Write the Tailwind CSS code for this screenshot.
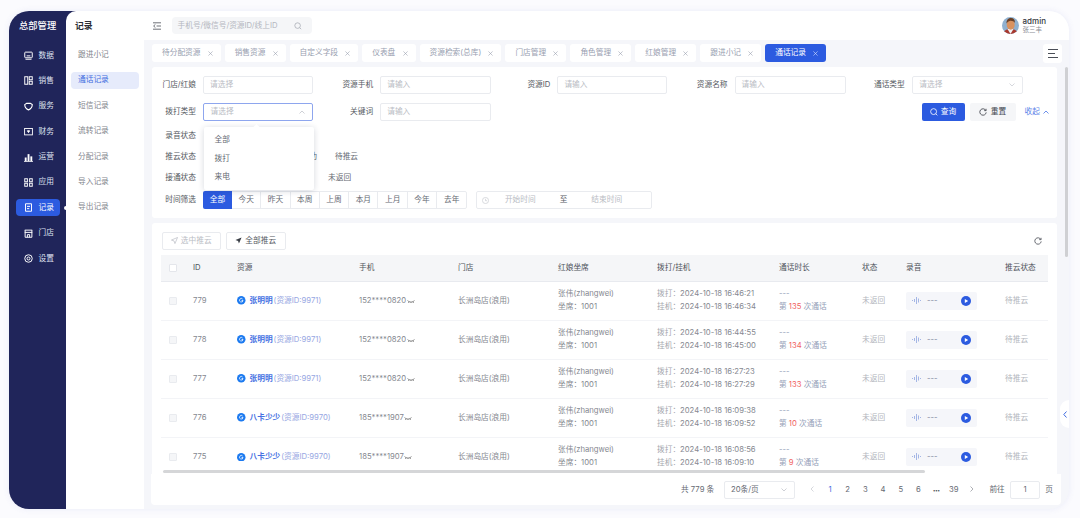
<!DOCTYPE html>
<html lang="zh">
<head>
<meta charset="utf-8">
<title>通话记录</title>
<script src="https://cdn.jsdelivr.net/npm/@tailwindcss/browser@4"></script>
</head>
<body class="m-0">
<div class="w-[1080px] h-[518px] overflow-hidden bg-[#fbfbfe] pt-[11px] pl-[9px] font-[family-name:Inter,'Noto_Sans_CJK_SC',sans-serif] text-[7.7px] leading-[12px] text-[#666a73]">
  <div class="relative flex w-[1060px] h-[498px] rounded-[20px] overflow-hidden bg-[#f5f6fa] shadow-[0_0_6px_rgba(90,100,200,0.10)]">
    <!-- Navy rail + submenu -->
    <div class="flex shrink-0 bg-[#20255a]">
      <nav class="relative w-[57px] flex flex-col text-[#dfe2f0]">
        <div class="h-[29px] pt-[9px] pl-[10px] text-[9.3px] font-medium text-white">总部管理</div>
        <ul class="mt-[7px] flex flex-col gap-[8.4px] pl-[6.5px] pr-[6.5px]">
          <li class="h-[17px] flex items-center gap-[6px] pl-[8px] rounded-[4px]"><svg class="w-[9px] h-[9px]" viewBox="0 0 12 12" fill="none" stroke="#fff" stroke-width="1.3"><rect x="1" y="1.5" width="10" height="7.5" rx="1"/><path d="M2 11h8M3.5 6.5h5"/></svg><span>数据</span></li>
          <li class="h-[17px] flex items-center gap-[6px] pl-[8px] rounded-[4px]"><svg class="w-[9px] h-[9px]" viewBox="0 0 12 12" fill="none" stroke="#fff" stroke-width="1.3"><rect x="1" y="1" width="4" height="10"/><rect x="7" y="1" width="4" height="4"/><rect x="7" y="7" width="4" height="4"/></svg><span>销售</span></li>
          <li class="h-[17px] flex items-center gap-[6px] pl-[8px] rounded-[4px]"><svg class="w-[9px] h-[9px]" viewBox="0 0 12 12" fill="none" stroke="#fff" stroke-width="1.5"><path d="M1 3.5 3.5 1.8h5L11 3.5c0 3-2 5.5-5 7-3-1.5-5-4-5-7Z"/></svg><span>服务</span></li>
          <li class="h-[17px] flex items-center gap-[6px] pl-[8px] rounded-[4px]"><svg class="w-[9px] h-[9px]" viewBox="0 0 12 12" fill="none" stroke="#fff" stroke-width="1.2"><rect x="0.8" y="2" width="10.4" height="8.5"/><path d="M4.5 5h3L6 7.5Z" fill="#fff"/></svg><span>财务</span></li>
          <li class="h-[17px] flex items-center gap-[6px] pl-[8px] rounded-[4px]"><svg class="w-[9px] h-[9px]" viewBox="0 0 12 12" fill="#fff"><rect x="1" y="6" width="2.5" height="5"/><rect x="4.8" y="1.5" width="2.5" height="9.5"/><rect x="8.5" y="4.5" width="2.5" height="6.5"/><rect x="0" y="11" width="12" height="1"/></svg><span>运营</span></li>
          <li class="h-[17px] flex items-center gap-[6px] pl-[8px] rounded-[4px]"><svg class="w-[9px] h-[9px]" viewBox="0 0 12 12" fill="none" stroke="#fff" stroke-width="1.3"><rect x="1" y="1" width="3.5" height="4"/><rect x="1" y="7" width="3.5" height="4"/><rect x="7.5" y="1" width="3.5" height="4"/><rect x="7.5" y="7" width="3.5" height="4"/></svg><span>应用</span></li>
          <li class="h-[17px] flex items-center gap-[6px] pl-[8px] rounded-[4px] bg-[#2c5be0] text-white"><svg class="w-[9px] h-[9px]" viewBox="0 0 12 12" fill="none" stroke="#fff" stroke-width="1.3"><path d="M2 1h8v10H2Z"/><path d="M4 4.5h4M4 7.5h3"/></svg><span>记录</span></li>
          <li class="h-[17px] flex items-center gap-[6px] pl-[8px] rounded-[4px]"><svg class="w-[9px] h-[9px]" viewBox="0 0 12 12" fill="none" stroke="#fff" stroke-width="1.3"><path d="M1 1.5h10M1.5 1.5V11h9V1.5M1 4.5h10M4.5 11V7.5h3V11"/></svg><span>门店</span></li>
          <li class="h-[17px] flex items-center gap-[6px] pl-[8px] rounded-[4px]"><svg class="w-[9px] h-[9px]" viewBox="0 0 12 12" fill="none" stroke="#fff" stroke-width="1.3"><circle cx="6" cy="6" r="5"/><circle cx="6" cy="6" r="2"/></svg><span>设置</span></li>
        </ul>
        <span class="absolute left-[55px] top-[194.5px] w-[4px] h-[4px] rounded-full bg-white"></span>
      </nav>
      <aside class="w-[78px] bg-white rounded-tl-[10px] px-[5px] text-[#82858c]">
        <div class="h-[29px] pt-[9px] pl-[4px] text-[8.8px] font-semibold text-[#2c2f36]">记录</div>
        <ul class="mt-[6.5px] flex flex-col gap-[8.4px]">
          <li class="h-[17px] flex items-center pl-[7px] rounded-[4px]">跟进小记</li>
          <li class="h-[17px] flex items-center pl-[7px] rounded-[4px] bg-[#e6ebfb] text-[#3f6be0]">通话记录</li>
          <li class="h-[17px] flex items-center pl-[7px] rounded-[4px]">短信记录</li>
          <li class="h-[17px] flex items-center pl-[7px] rounded-[4px]">流转记录</li>
          <li class="h-[17px] flex items-center pl-[7px] rounded-[4px]">分配记录</li>
          <li class="h-[17px] flex items-center pl-[7px] rounded-[4px]">导入记录</li>
          <li class="h-[17px] flex items-center pl-[7px] rounded-[4px]">导出记录</li>
        </ul>
      </aside>
    </div>

    <!-- Main -->
    <div class="flex-1 min-w-0 flex flex-col">
      <header class="h-[29px] shrink-0 bg-white flex items-center pl-[9px] pr-[23px]">
        <svg class="w-[8px] h-[8px]" viewBox="0 0 10 10" fill="none" stroke="#4a4e57" stroke-width="1"><path d="M0 1h10M4.5 5H10M0 9h10M3 3 .8 5 3 7"/></svg>
        <div class="ml-[10.5px] w-[140px] h-[17px] rounded-[4px] bg-[#f5f6f8] flex items-center justify-between pl-[6px] pr-[10px] text-[#b4b7bf]">
          <span>手机号/微信号/资源ID/线上ID</span>
          <svg class="w-[8px] h-[8px]" viewBox="0 0 10 10" fill="none" stroke="#a9adb6" stroke-width="1"><circle cx="4.5" cy="4.5" r="3.5"/><path d="m7 7 2 2"/></svg>
        </div>
        <div class="ml-auto flex items-center gap-[4px]">
          <svg class="w-[17px] h-[17px] rounded-full" viewBox="0 0 17 17"><rect width="17" height="17" fill="#8fb0cf"/><path d="M1 17c1-4 4-5 7.5-5s6.5 1 7.5 5Z" fill="#a8392e"/><path d="M5.500 12 8.500 17 11.500 12Z" fill="#f1f3f6"/><ellipse cx="8.7" cy="7.8" rx="4" ry="5" fill="#d9925f"/><path d="M4.500 6.500C4.300 2.800 6.500 1 9 1s4.200 1.800 3.900 5c-1-2-3.800-2.500-5.200-2-.9.4-2.200 1-3.200 2.500Z" fill="#6b4026"/></svg>
          <div class="flex flex-col">
            <span class="text-[8px] leading-[10px] font-medium text-[#33363d] -mt-[1px]">admin</span>
            <span class="text-[6.5px] leading-[9px] text-[#8a8d94]">张三丰</span>
          </div>
        </div>
      </header>

      <div class="flex-1 min-h-0 flex flex-col pl-[8px]">
        <!-- Tabs -->
        <div class="mt-[4px] h-[18px] shrink-0 flex items-center justify-between pr-[7px] text-[#98a0b0]">
          <ul class="flex gap-[4px]">
            <li class="h-[18px] flex items-center gap-[7.2px] pl-[10px] pr-[8px] bg-white rounded-[3px]">待分配资源<svg class="w-[5px] h-[5px]" viewBox="0 0 6 6" stroke="#9aa1b0" stroke-width=".7"><path d="m.5.5 5 5M5.500.5l-5 5"/></svg></li>
            <li class="h-[18px] flex items-center gap-[7.2px] pl-[10px] pr-[8px] bg-white rounded-[3px]">销售资源<svg class="w-[5px] h-[5px]" viewBox="0 0 6 6" stroke="#9aa1b0" stroke-width=".7"><path d="m.5.5 5 5M5.500.5l-5 5"/></svg></li>
            <li class="h-[18px] flex items-center gap-[7.2px] pl-[10px] pr-[8px] bg-white rounded-[3px]">自定义字段<svg class="w-[5px] h-[5px]" viewBox="0 0 6 6" stroke="#9aa1b0" stroke-width=".7"><path d="m.5.5 5 5M5.500.5l-5 5"/></svg></li>
            <li class="h-[18px] flex items-center gap-[7.2px] pl-[10px] pr-[8px] bg-white rounded-[3px]">仪表盘<svg class="w-[5px] h-[5px]" viewBox="0 0 6 6" stroke="#9aa1b0" stroke-width=".7"><path d="m.5.5 5 5M5.500.5l-5 5"/></svg></li>
            <li class="h-[18px] flex items-center gap-[7.2px] pl-[10px] pr-[8px] bg-white rounded-[3px]">资源检索(总库)<svg class="w-[5px] h-[5px]" viewBox="0 0 6 6" stroke="#9aa1b0" stroke-width=".7"><path d="m.5.5 5 5M5.500.5l-5 5"/></svg></li>
            <li class="h-[18px] flex items-center gap-[7.2px] pl-[10px] pr-[8px] bg-white rounded-[3px]">门店管理<svg class="w-[5px] h-[5px]" viewBox="0 0 6 6" stroke="#9aa1b0" stroke-width=".7"><path d="m.5.5 5 5M5.500.5l-5 5"/></svg></li>
            <li class="h-[18px] flex items-center gap-[7.2px] pl-[10px] pr-[8px] bg-white rounded-[3px]">角色管理<svg class="w-[5px] h-[5px]" viewBox="0 0 6 6" stroke="#9aa1b0" stroke-width=".7"><path d="m.5.5 5 5M5.500.5l-5 5"/></svg></li>
            <li class="h-[18px] flex items-center gap-[7.2px] pl-[10px] pr-[8px] bg-white rounded-[3px]">红娘管理<svg class="w-[5px] h-[5px]" viewBox="0 0 6 6" stroke="#9aa1b0" stroke-width=".7"><path d="m.5.5 5 5M5.500.5l-5 5"/></svg></li>
            <li class="h-[18px] flex items-center gap-[7.2px] pl-[10px] pr-[8px] bg-white rounded-[3px]">跟进小记<svg class="w-[5px] h-[5px]" viewBox="0 0 6 6" stroke="#9aa1b0" stroke-width=".7"><path d="m.5.5 5 5M5.500.5l-5 5"/></svg></li>
            <li class="h-[18px] flex items-center gap-[7.2px] pl-[10px] pr-[8px] bg-[#2c5be0] text-white rounded-[3px]">通话记录<svg class="w-[5px] h-[5px]" viewBox="0 0 6 6" stroke="#dfe6fb" stroke-width=".7"><path d="m.5.5 5 5M5.500.5l-5 5"/></svg></li>
          </ul>
          <div class="w-[19px] h-[19px] bg-white rounded-[3px] flex items-center justify-center">
            <svg class="w-[10px] h-[9px]" viewBox="0 0 10 9" stroke="#4a4e57" stroke-width="1"><path d="M0 .5h10M0 4.500h7M0 8.500h10"/></svg>
          </div>
        </div>

        <!-- Filter card -->
        <section class="relative mt-[5px] mr-[12px] h-[151px] shrink-0 bg-white rounded-[3px] pt-[8.5px]">
          <div class="grid grid-cols-[repeat(5,177.2px)] gap-y-[9px]">
            <label class="flex items-center gap-[7px]"><span class="w-[44px] text-right whitespace-nowrap text-[#555961]">门店/红娘</span><span class="w-[110px] h-[18px] border border-[#e9ebef] rounded-[2px] flex items-center pl-[6px] text-[#b9bcc4]">请选择</span></label>
            <label class="flex items-center gap-[7px]"><span class="w-[44px] text-right whitespace-nowrap text-[#555961]">资源手机</span><span class="w-[111px] h-[18px] border border-[#e9ebef] rounded-[2px] flex items-center pl-[6px] text-[#b9bcc4]">请输入</span></label>
            <label class="flex items-center gap-[7px]"><span class="w-[44px] text-right whitespace-nowrap text-[#555961]">资源ID</span><span class="w-[110px] h-[18px] border border-[#e9ebef] rounded-[2px] flex items-center pl-[6px] text-[#b9bcc4]">请输入</span></label>
            <label class="flex items-center gap-[7px]"><span class="w-[44px] text-right whitespace-nowrap text-[#555961]">资源名称</span><span class="w-[111px] h-[18px] border border-[#e9ebef] rounded-[2px] flex items-center pl-[6px] text-[#b9bcc4]">请输入</span></label>
            <label class="flex items-center gap-[7px]"><span class="w-[44px] text-right whitespace-nowrap text-[#555961]">通话类型</span><span class="w-[111px] h-[18px] border border-[#e9ebef] rounded-[2px] flex items-center justify-between pl-[6.5px] pr-[7px] text-[#b9bcc4]">请选择<svg class="w-[6px] h-[4px]" viewBox="0 0 6 4" fill="none" stroke="#c4c7ce" stroke-width=".7"><path d="m.5.5 2.500 2.500L5.500.5"/></svg></span></label>
            <label class="flex items-center gap-[7px]"><span class="w-[44px] text-right whitespace-nowrap text-[#555961]">拨打类型</span><span class="w-[110px] h-[18px] border border-[#8ea6ee] rounded-[2px] flex items-center justify-between pl-[6.5px] pr-[7px] text-[#b9bcc4]">请选择<svg class="w-[6px] h-[4px]" viewBox="0 0 6 4" fill="none" stroke="#b9bcc4" stroke-width=".7"><path d="m.5 3.500 2.500-2.500 2.500 2.500"/></svg></span></label>
            <label class="flex items-center gap-[7px]"><span class="w-[44px] text-right whitespace-nowrap text-[#555961]">关键词</span><span class="w-[111px] h-[18px] border border-[#e9ebef] rounded-[2px] flex items-center pl-[6px] text-[#b9bcc4]">请输入</span></label>
            <div class="col-span-3 -mr-[11px] flex items-center justify-end gap-[5px]">
              <button class="w-[43px] h-[18px] rounded-[2px] bg-[#2c5be0] text-white flex items-center justify-center gap-[3px]"><svg class="w-[8px] h-[8px]" viewBox="0 0 10 10" fill="none" stroke="#fff" stroke-width="1"><circle cx="4.5" cy="4.5" r="3.7"/><path d="m7.200 7.200 2 2"/></svg>查询</button>
              <button class="w-[46px] h-[18px] rounded-[2px] bg-[#f5f6f8] text-[#444850] flex items-center justify-center gap-[4px]"><svg class="w-[8px] h-[8px]" viewBox="0 0 10 10" fill="none" stroke="#444850" stroke-width="1.1"><path d="M8.500 3A4 4 0 1 0 9 5.500M8.800 1v2.300H6.500"/></svg>重置</button>
              <span class="ml-[4px] flex items-center gap-[3px] text-[#5b83e8]">收起<svg class="w-[6px] h-[4px]" viewBox="0 0 6 4" fill="none" stroke="#5b83e8" stroke-width=".9"><path d="m.5 3.500 2.500-2.500 2.500 2.500"/></svg></span>
            </div>
          </div>
          <div class="mt-[9.5px] flex h-[12px] items-center"><span class="w-[44px] text-right text-[#555961]">录音状态</span></div>
          <div class="mt-[8.5px] flex h-[12px] items-center"><span class="w-[44px] text-right text-[#555961]">推云状态</span><span class="ml-[90.2px] mr-[18px]">推云成功</span><span>待推云</span></div>
          <div class="mt-[9.5px] flex h-[12px] items-center"><span class="w-[44px] text-right text-[#555961]">接通状态</span><span class="ml-[132px]">未返回</span></div>
          <div class="mt-[7px] flex items-center"><span class="w-[44px] text-right text-[#555961]">时间筛选</span>
            <div class="ml-[7px] flex h-[18px] rounded-[2px] border border-[#e9ebef] text-[#666a73]">
              <span class="w-[29px] -my-[1px] -ml-[1px] flex items-center justify-center rounded-l-[2px] bg-[#2c5be0] text-white">全部</span>
              <span class="w-[29.3px] flex items-center justify-center border-r border-[#e9ebef]">今天</span>
              <span class="w-[29.3px] flex items-center justify-center border-r border-[#e9ebef]">昨天</span>
              <span class="w-[29.3px] flex items-center justify-center border-r border-[#e9ebef]">本周</span>
              <span class="w-[29.3px] flex items-center justify-center border-r border-[#e9ebef]">上周</span>
              <span class="w-[29.3px] flex items-center justify-center border-r border-[#e9ebef]">本月</span>
              <span class="w-[29.3px] flex items-center justify-center border-r border-[#e9ebef]">上月</span>
              <span class="w-[29.3px] flex items-center justify-center border-r border-[#e9ebef]">今年</span>
              <span class="w-[29.3px] flex items-center justify-center">去年</span>
            </div>
            <div class="ml-[8.5px] w-[176.5px] h-[18px] rounded-[2px] border border-[#e9ebef] flex items-center pl-[5px] text-[#b9bcc4]">
              <svg class="w-[7px] h-[7px]" viewBox="0 0 8 8" fill="none" stroke="#b9bcc4" stroke-width=".6"><circle cx="4" cy="4" r="3.5"/><path d="M4 2v2.200h1.800"/></svg>
              <span class="ml-[16px]">开始时间</span><span class="ml-[24px] text-[#555961]">至</span><span class="ml-[24px]">结束时间</span>
            </div>
          </div>

          <!-- Dropdown popover -->
          <div class="absolute left-[51.5px] top-[60px] w-[110.5px] h-[63px] bg-white rounded-[2px] shadow-[0_1px_6px_rgba(30,40,70,0.18)] flex flex-col justify-center gap-[6.8px] pl-[11px] text-[#666a73]">
            <span class="absolute left-[50px] -top-[2.5px] w-[5px] h-[5px] rotate-45 bg-white"></span>
            <span>全部</span><span>拨打</span><span>来电</span>
          </div>
        </section>

        <!-- Table card -->
        <section class="mt-[5px] mr-[12px] h-[251px] shrink-0 bg-white rounded-t-[3px] px-[9px] pt-[8.5px] relative overflow-hidden">
          <div class="flex items-center h-[18px] gap-[5px] pl-[.5px]">
            <button class="w-[59.5px] h-[18px] border border-[#e9ebef] rounded-[2px] flex items-center justify-center gap-[3px] text-[#b9bcc4]"><svg class="w-[7px] h-[7px]" viewBox="0 0 8 8" fill="none" stroke="#b9bcc4" stroke-width=".8"><path d="M7.500.5.500 3.500l3 1 1 3Z"/></svg>选中推云</button>
            <button class="w-[59.5px] h-[18px] border border-[#e9ebef] rounded-[2px] flex items-center justify-center gap-[3px] text-[#555961]"><svg class="w-[7px] h-[7px]" viewBox="0 0 8 8" fill="#3a3e46"><path d="M7.500.5.500 3.500l3 1 1 3Z"/></svg>全部推云</button>
            <svg class="ml-auto mr-[6px] w-[8px] h-[8px]" viewBox="0 0 10 10" fill="none" stroke="#555961" stroke-width="1.1"><path d="M8.500 3A4 4 0 1 0 9 5.500M8.800 1v2.300H6.500"/></svg>
          </div>
          <table class="mt-[5.5px] w-[887px] table-fixed border-collapse text-left">
            <colgroup>
              <col class="w-[32px]"><col class="w-[44px]"><col class="w-[122px]"><col class="w-[99px]"><col class="w-[100px]"><col class="w-[99px]"><col class="w-[122px]"><col class="w-[83px]"><col class="w-[44px]"><col class="w-[99px]"><col class="w-[43px]">
            </colgroup>
            <thead>
              <tr class="h-[26px] bg-[#f5f6f8] border-b border-[#e8eaef] text-[#4f535b]">
                <th class="font-normal pl-[8px]"><span class="block w-[8px] h-[8px] bg-white border border-[#e4e6eb] rounded-[1px]"></span></th>
                <th class="font-normal">ID</th><th class="font-normal">资源</th><th class="font-normal">手机</th><th class="font-normal">门店</th><th class="font-normal">红娘坐席</th><th class="font-normal">拨打/挂机</th><th class="font-normal">通话时长</th><th class="font-normal">状态</th><th class="font-normal">录音</th><th class="font-normal whitespace-nowrap">推云状态</th>
              </tr>
            </thead>
            <tbody class="text-[#85888f]">
              <tr class="h-[39px] border-b border-[#f3f4f7]">
                <td class="pl-[8px]"><span class="block w-[8px] h-[8px] bg-[#f5f6f8] border border-[#e9ebef] rounded-[1px]"></span></td>
                <td>779</td>
                <td class="whitespace-nowrap"><span class="flex items-center gap-[4px]"><svg class="w-[8.5px] h-[8.5px]" viewBox="0 0 10 10"><circle cx="5" cy="5" r="5" fill="#1c7af0"/><path d="M6.600 3.600A2.100 2.100 0 1 0 7.100 5.300H5.400" fill="none" stroke="#fff" stroke-width=".9"/></svg><span class="font-semibold text-[#4470e2]">张明明</span><span class="-ml-[3px] text-[#96a6e2]">(资源ID:9971)</span></span></td>
                <td><span class="flex items-center gap-[.5px]">152****0820<svg class="w-[8px] h-[3px] mt-[2px]" viewBox="0 0 8 3" fill="none" stroke="#666" stroke-width=".7"><path d="M.5.5c2 2 5 2 7 0M2 1.500 1.500 3M4 2v1M6 1.500 6.500 3"/></svg></span></td>
                <td>长洲岛店(浪用)</td>
                <td class="leading-[12.6px]">张伟(zhangwei)<br>坐席：1001</td>
                <td class="leading-[12.6px] whitespace-nowrap"><span class="text-[#a4a7ae]">拨打：</span>2024-10-18 16:46:21<br><span class="text-[#a4a7ae]">挂机：</span>2024-10-18 16:46:34</td>
                <td class="leading-[12.6px] whitespace-nowrap text-[#94a0b8]">---<br>第 <span class="text-[#f0625f]">135</span> 次通话</td>
                <td class="text-[#b3b6bd]">未返回</td>
                <td><span class="flex items-center w-[71px] h-[18px] rounded-[2px] bg-[#f5f6fa] pl-[6px] pr-[6px] text-[#7f8a9f]"><svg class="w-[10px] h-[7px]" viewBox="0 0 10 7" stroke="#8fa6e0" stroke-width=".8"><path d="M.5 3v1M2.500 2v3M4.500 0v7M6.500 1.500v4M8.500 3v1"/></svg><span class="ml-[5px]">---</span><svg class="ml-auto w-[10px] h-[10px]" viewBox="0 0 10 10"><circle cx="5" cy="5" r="5" fill="#2c5be0"/><path d="M3.800 3v4L7.200 5Z" fill="#fff"/></svg></span></td>
                <td class="whitespace-nowrap text-[#b3b6bd]">待推云</td>
              </tr>
              <tr class="h-[39px] border-b border-[#f3f4f7]">
                <td class="pl-[8px]"><span class="block w-[8px] h-[8px] bg-[#f5f6f8] border border-[#e9ebef] rounded-[1px]"></span></td>
                <td>778</td>
                <td class="whitespace-nowrap"><span class="flex items-center gap-[4px]"><svg class="w-[8.5px] h-[8.5px]" viewBox="0 0 10 10"><circle cx="5" cy="5" r="5" fill="#1c7af0"/><path d="M6.600 3.600A2.100 2.100 0 1 0 7.100 5.300H5.400" fill="none" stroke="#fff" stroke-width=".9"/></svg><span class="font-semibold text-[#4470e2]">张明明</span><span class="-ml-[3px] text-[#96a6e2]">(资源ID:9971)</span></span></td>
                <td><span class="flex items-center gap-[.5px]">152****0820<svg class="w-[8px] h-[3px] mt-[2px]" viewBox="0 0 8 3" fill="none" stroke="#666" stroke-width=".7"><path d="M.5.5c2 2 5 2 7 0M2 1.500 1.500 3M4 2v1M6 1.500 6.500 3"/></svg></span></td>
                <td>长洲岛店(浪用)</td>
                <td class="leading-[12.6px]">张伟(zhangwei)<br>坐席：1001</td>
                <td class="leading-[12.6px] whitespace-nowrap"><span class="text-[#a4a7ae]">拨打：</span>2024-10-18 16:44:55<br><span class="text-[#a4a7ae]">挂机：</span>2024-10-18 16:45:00</td>
                <td class="leading-[12.6px] whitespace-nowrap text-[#94a0b8]">---<br>第 <span class="text-[#f0625f]">134</span> 次通话</td>
                <td class="text-[#b3b6bd]">未返回</td>
                <td><span class="flex items-center w-[71px] h-[18px] rounded-[2px] bg-[#f5f6fa] pl-[6px] pr-[6px] text-[#7f8a9f]"><svg class="w-[10px] h-[7px]" viewBox="0 0 10 7" stroke="#8fa6e0" stroke-width=".8"><path d="M.5 3v1M2.500 2v3M4.500 0v7M6.500 1.500v4M8.500 3v1"/></svg><span class="ml-[5px]">---</span><svg class="ml-auto w-[10px] h-[10px]" viewBox="0 0 10 10"><circle cx="5" cy="5" r="5" fill="#2c5be0"/><path d="M3.800 3v4L7.200 5Z" fill="#fff"/></svg></span></td>
                <td class="whitespace-nowrap text-[#b3b6bd]">待推云</td>
              </tr>
              <tr class="h-[39px] border-b border-[#f3f4f7]">
                <td class="pl-[8px]"><span class="block w-[8px] h-[8px] bg-[#f5f6f8] border border-[#e9ebef] rounded-[1px]"></span></td>
                <td>777</td>
                <td class="whitespace-nowrap"><span class="flex items-center gap-[4px]"><svg class="w-[8.5px] h-[8.5px]" viewBox="0 0 10 10"><circle cx="5" cy="5" r="5" fill="#1c7af0"/><path d="M6.600 3.600A2.100 2.100 0 1 0 7.100 5.300H5.400" fill="none" stroke="#fff" stroke-width=".9"/></svg><span class="font-semibold text-[#4470e2]">张明明</span><span class="-ml-[3px] text-[#96a6e2]">(资源ID:9971)</span></span></td>
                <td><span class="flex items-center gap-[.5px]">152****0820<svg class="w-[8px] h-[3px] mt-[2px]" viewBox="0 0 8 3" fill="none" stroke="#666" stroke-width=".7"><path d="M.5.5c2 2 5 2 7 0M2 1.500 1.500 3M4 2v1M6 1.500 6.500 3"/></svg></span></td>
                <td>长洲岛店(浪用)</td>
                <td class="leading-[12.6px]">张伟(zhangwei)<br>坐席：1001</td>
                <td class="leading-[12.6px] whitespace-nowrap"><span class="text-[#a4a7ae]">拨打：</span>2024-10-18 16:27:23<br><span class="text-[#a4a7ae]">挂机：</span>2024-10-18 16:27:29</td>
                <td class="leading-[12.6px] whitespace-nowrap text-[#94a0b8]">---<br>第 <span class="text-[#f0625f]">133</span> 次通话</td>
                <td class="text-[#b3b6bd]">未返回</td>
                <td><span class="flex items-center w-[71px] h-[18px] rounded-[2px] bg-[#f5f6fa] pl-[6px] pr-[6px] text-[#7f8a9f]"><svg class="w-[10px] h-[7px]" viewBox="0 0 10 7" stroke="#8fa6e0" stroke-width=".8"><path d="M.5 3v1M2.500 2v3M4.500 0v7M6.500 1.500v4M8.500 3v1"/></svg><span class="ml-[5px]">---</span><svg class="ml-auto w-[10px] h-[10px]" viewBox="0 0 10 10"><circle cx="5" cy="5" r="5" fill="#2c5be0"/><path d="M3.800 3v4L7.200 5Z" fill="#fff"/></svg></span></td>
                <td class="whitespace-nowrap text-[#b3b6bd]">待推云</td>
              </tr>
              <tr class="h-[39px] border-b border-[#f3f4f7]">
                <td class="pl-[8px]"><span class="block w-[8px] h-[8px] bg-[#f5f6f8] border border-[#e9ebef] rounded-[1px]"></span></td>
                <td>776</td>
                <td class="whitespace-nowrap"><span class="flex items-center gap-[4px]"><svg class="w-[8.5px] h-[8.5px]" viewBox="0 0 10 10"><circle cx="5" cy="5" r="5" fill="#1c7af0"/><path d="M6.600 3.600A2.100 2.100 0 1 0 7.100 5.300H5.400" fill="none" stroke="#fff" stroke-width=".9"/></svg><span class="font-semibold text-[#4470e2]">八卡少少</span><span class="-ml-[3px] text-[#96a6e2]">(资源ID:9970)</span></span></td>
                <td><span class="flex items-center gap-[.5px]">185****1907<svg class="w-[8px] h-[3px] mt-[2px]" viewBox="0 0 8 3" fill="none" stroke="#666" stroke-width=".7"><path d="M.5.5c2 2 5 2 7 0M2 1.500 1.500 3M4 2v1M6 1.500 6.500 3"/></svg></span></td>
                <td>长洲岛店(浪用)</td>
                <td class="leading-[12.6px]">张伟(zhangwei)<br>坐席：1001</td>
                <td class="leading-[12.6px] whitespace-nowrap"><span class="text-[#a4a7ae]">拨打：</span>2024-10-18 16:09:38<br><span class="text-[#a4a7ae]">挂机：</span>2024-10-18 16:09:52</td>
                <td class="leading-[12.6px] whitespace-nowrap text-[#94a0b8]">---<br>第 <span class="text-[#f0625f]">10</span> 次通话</td>
                <td class="text-[#b3b6bd]">未返回</td>
                <td><span class="flex items-center w-[71px] h-[18px] rounded-[2px] bg-[#f5f6fa] pl-[6px] pr-[6px] text-[#7f8a9f]"><svg class="w-[10px] h-[7px]" viewBox="0 0 10 7" stroke="#8fa6e0" stroke-width=".8"><path d="M.5 3v1M2.500 2v3M4.500 0v7M6.500 1.500v4M8.500 3v1"/></svg><span class="ml-[5px]">---</span><svg class="ml-auto w-[10px] h-[10px]" viewBox="0 0 10 10"><circle cx="5" cy="5" r="5" fill="#2c5be0"/><path d="M3.800 3v4L7.200 5Z" fill="#fff"/></svg></span></td>
                <td class="whitespace-nowrap text-[#b3b6bd]">待推云</td>
              </tr>
              <tr class="h-[39px]">
                <td class="pl-[8px]"><span class="block w-[8px] h-[8px] bg-[#f5f6f8] border border-[#e9ebef] rounded-[1px]"></span></td>
                <td>775</td>
                <td class="whitespace-nowrap"><span class="flex items-center gap-[4px]"><svg class="w-[8.5px] h-[8.5px]" viewBox="0 0 10 10"><circle cx="5" cy="5" r="5" fill="#1c7af0"/><path d="M6.600 3.600A2.100 2.100 0 1 0 7.100 5.300H5.400" fill="none" stroke="#fff" stroke-width=".9"/></svg><span class="font-semibold text-[#4470e2]">八卡少少</span><span class="-ml-[3px] text-[#96a6e2]">(资源ID:9970)</span></span></td>
                <td><span class="flex items-center gap-[.5px]">185****1907<svg class="w-[8px] h-[3px] mt-[2px]" viewBox="0 0 8 3" fill="none" stroke="#666" stroke-width=".7"><path d="M.5.5c2 2 5 2 7 0M2 1.500 1.500 3M4 2v1M6 1.500 6.500 3"/></svg></span></td>
                <td>长洲岛店(浪用)</td>
                <td class="leading-[12.6px]">张伟(zhangwei)<br>坐席：1001</td>
                <td class="leading-[12.6px] whitespace-nowrap"><span class="text-[#a4a7ae]">拨打：</span>2024-10-18 16:08:56<br><span class="text-[#a4a7ae]">挂机：</span>2024-10-18 16:09:10</td>
                <td class="leading-[12.6px] whitespace-nowrap text-[#94a0b8]">---<br>第 <span class="text-[#f0625f]">9</span> 次通话</td>
                <td class="text-[#b3b6bd]">未返回</td>
                <td><span class="flex items-center w-[71px] h-[18px] rounded-[2px] bg-[#f5f6fa] pl-[6px] pr-[6px] text-[#7f8a9f]"><svg class="w-[10px] h-[7px]" viewBox="0 0 10 7" stroke="#8fa6e0" stroke-width=".8"><path d="M.5 3v1M2.500 2v3M4.500 0v7M6.500 1.500v4M8.500 3v1"/></svg><span class="ml-[5px]">---</span><svg class="ml-auto w-[10px] h-[10px]" viewBox="0 0 10 10"><circle cx="5" cy="5" r="5" fill="#2c5be0"/><path d="M3.800 3v4L7.200 5Z" fill="#fff"/></svg></span></td>
                <td class="whitespace-nowrap text-[#b3b6bd]">待推云</td>
              </tr>
            </tbody>
          </table>
          <span class="absolute left-[11px] top-[247px] w-[762px] h-[3px] rounded-full bg-[#d5d6d8]"></span>
        </section>

        <!-- Pagination -->
        <footer class="-ml-[1px] mr-[8px] h-[31px] shrink-0 bg-white rounded-b-[4px] flex items-center pl-[530px] text-[#666a73]">
          <span class="w-[34px] whitespace-nowrap">共 779 条</span>
          <span class="ml-[8.5px] w-[71px] h-[18px] border border-[#e9ebef] rounded-[2px] flex items-center justify-between pl-[6.5px] pr-[7px]">20条/页<svg class="w-[6px] h-[4px]" viewBox="0 0 6 4" fill="none" stroke="#b9bcc4" stroke-width=".7"><path d="m.5.5 2.500 2.500L5.500.5"/></svg></span>
          <ul class="ml-[9px] flex items-center">
            <li class="w-[17.7px] text-center"><svg class="inline w-[4px] h-[6px]" viewBox="0 0 4 6" fill="none" stroke="#c4c7ce" stroke-width=".7"><path d="M3.500.5 1 3l2.500 2.500"/></svg></li>
            <li class="w-[17.7px] text-center text-[#3f6be0]">1</li>
            <li class="w-[17.7px] text-center">2</li>
            <li class="w-[17.7px] text-center">3</li>
            <li class="w-[17.7px] text-center">4</li>
            <li class="w-[17.7px] text-center">5</li>
            <li class="w-[17.7px] text-center">6</li>
            <li class="w-[17.7px] text-center text-[5px] tracking-[-0.5px] text-[#4f535b]">•••</li>
            <li class="w-[17.7px] text-center">39</li>
            <li class="w-[17.7px] text-center"><svg class="inline w-[4px] h-[6px]" viewBox="0 0 4 6" fill="none" stroke="#8b8e95" stroke-width=".7"><path d="m.5.5 2.500 2.500L.5 5.500"/></svg></li>
          </ul>
          <span class="ml-[9px] whitespace-nowrap">前往</span>
          <span class="ml-[5px] w-[30.5px] h-[18px] border border-[#e9ebef] rounded-[2px] flex items-center justify-center">1</span>
          <span class="ml-[5px]">页</span>
        </footer>
      </div>
    </div>

    <!-- Page scrollbar and side handle, over the content -->
    <span class="absolute right-[1px] top-[56px] w-[3px] h-[190px] rounded-full bg-[#cfd0d3]"></span>
    <button class="absolute right-0 top-[389px] w-[9px] h-[28px] rounded-l-full bg-white flex items-center justify-center"><svg class="w-[4px] h-[7px]" viewBox="0 0 4 7" fill="none" stroke="#3f6be0" stroke-width="1"><path d="M3.500.5.800 3.500l2.700 3"/></svg></button>
  </div>
</div>
</body>
</html>
